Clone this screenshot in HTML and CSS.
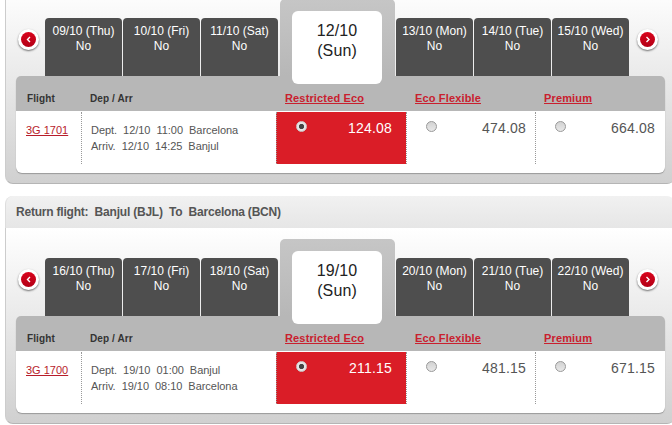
FILE: index.html
```html
<!DOCTYPE html>
<html lang="en">
<head>
  <meta charset="UTF-8">
  <title>Select flights</title>
  <link rel="stylesheet" href="styles.css">
</head>
<body>

  <form class="flights">

    <section class="flight outbound">
      <div class="flight-body">
        <div class="days">
          <button type="button" class="arrow" aria-label="Previous days">
            <svg viewBox="0 0 15 15"><path d="M9 5L6.5 7.5L9 10"/></svg>
          </button>
          <div class="day">09/10 (Thu)<br>No</div>
          <div class="day">10/10 (Fri)<br>No</div>
          <div class="day">11/10 (Sat)<br>No</div>
          <div class="day-active"><div class="day-card">12/10<br>(Sun)</div></div>
          <div class="day">13/10 (Mon)<br>No</div>
          <div class="day">14/10 (Tue)<br>No</div>
          <div class="day">15/10 (Wed)<br>No</div>
          <button type="button" class="arrow next" aria-label="Next days">
            <svg viewBox="0 0 15 15"><path d="M6.5 5L9 7.5L6.5 10"/></svg>
          </button>
        </div>

        <div class="fares">
          <div class="fares-head">
            <span>Flight</span>
            <span>Dep / Arr</span>
            <a href="#">Restricted Eco</a>
            <a href="#">Eco Flexible</a>
            <a href="#">Premium</a>
          </div>
          <div class="fares-row">
            <div class="number"><a href="#">3G 1701</a></div>
            <div class="times">Dept.&nbsp; 12/10&nbsp; 11:00&nbsp; Barcelona<br>Arriv.&nbsp; 12/10&nbsp; 14:25&nbsp; Banjul</div>
            <label class="fare selected"><input type="radio" name="out" checked><span>124.08</span></label>
            <label class="fare"><input type="radio" name="out"><span>474.08</span></label>
            <label class="fare"><input type="radio" name="out"><span>664.08</span></label>
          </div>
        </div>
      </div>
    </section>

    <section class="flight">
      <h2>Return flight:&nbsp; Banjul (BJL)&nbsp; To&nbsp; Barcelona (BCN)</h2>
      <div class="flight-body">
        <div class="days">
          <button type="button" class="arrow" aria-label="Previous days">
            <svg viewBox="0 0 15 15"><path d="M9 5L6.5 7.5L9 10"/></svg>
          </button>
          <div class="day">16/10 (Thu)<br>No</div>
          <div class="day">17/10 (Fri)<br>No</div>
          <div class="day">18/10 (Sat)<br>No</div>
          <div class="day-active"><div class="day-card">19/10<br>(Sun)</div></div>
          <div class="day">20/10 (Mon)<br>No</div>
          <div class="day">21/10 (Tue)<br>No</div>
          <div class="day">22/10 (Wed)<br>No</div>
          <button type="button" class="arrow next" aria-label="Next days">
            <svg viewBox="0 0 15 15"><path d="M6.5 5L9 7.5L6.5 10"/></svg>
          </button>
        </div>

        <div class="fares">
          <div class="fares-head">
            <span>Flight</span>
            <span>Dep / Arr</span>
            <a href="#">Restricted Eco</a>
            <a href="#">Eco Flexible</a>
            <a href="#">Premium</a>
          </div>
          <div class="fares-row">
            <div class="number"><a href="#">3G 1700</a></div>
            <div class="times">Dept.&nbsp; 19/10&nbsp; 01:00&nbsp; Banjul<br>Arriv.&nbsp; 19/10&nbsp; 08:10&nbsp; Barcelona</div>
            <label class="fare selected"><input type="radio" name="ret" checked><span>211.15</span></label>
            <label class="fare"><input type="radio" name="ret"><span>481.15</span></label>
            <label class="fare"><input type="radio" name="ret"><span>671.15</span></label>
          </div>
        </div>
      </div>
    </section>

  </form>

</body>
</html>
```
FILE: styles.css
```css
* {
  box-sizing: border-box;
}
body {
  margin: 0;
  background: #fff;
  font-family: "Liberation Sans", Arial, sans-serif;
  font-size: 12px;
  overflow: hidden;
}
.flights {
  display: flex;
  flex-direction: column;
  gap: 12px;
  width: 675px;
  padding-left: 5px;
}
.flight.outbound {
  margin-top: -12px;
}
.flight h2 {
  margin: 0;
  height: 32px;
  padding-left: 10px;
  border-left: 1px solid #ddd;
  border-radius: 8px 8px 0 0;
  background: linear-gradient(#f1f1f1, #e6e6e6);
  color: #555;
  font-size: 12px;
  line-height: 32px;
  letter-spacing: -0.21px;
}
.flight-body {
  height: 196px;
  padding: 11px 0 0 10px;
  background: linear-gradient(#fff, #d0d0d0);
  border: solid #b5b5b5;
  border-width: 0 0 1px 1px;
  border-left-color: #ccc;
  border-radius: 0 0 8px 8px;
}

/* day tabs */
.days {
  display: flex;
  align-items: flex-end;
  gap: 1px;
  height: 77px;
}
.day {
  width: 77px;
  height: 58px;
  padding-top: 6px;
  border-radius: 4px 4px 0 0;
  background: #4e4e4e;
  color: #fff;
  line-height: 15px;
  text-align: center;
}
.day-active {
  width: 115px;
  height: 77px;
  margin-left: 1px;
  padding: 12px 13px 0 12px;
  border-radius: 5px 5px 0 0;
  background: linear-gradient(#c6c6c6, #b7b7b7);
}
.day-card {
  position: relative;
  z-index: 1;
  height: 73px;
  padding-top: 10px;
  border-radius: 6px;
  background: #fff;
  color: #222;
  font-size: 16px;
  line-height: 20px;
  letter-spacing: 0.1px;
  text-align: center;
}
.arrow {
  display: flex;
  align-items: center;
  justify-content: center;
  width: 21px;
  height: 21px;
  margin: 0 5px 26px 2px;
  padding: 0;
  border: 0;
  border-radius: 50%;
  background: #fff;
  box-shadow: 0 1px 2px rgba(0, 0, 0, 0.55);
}
.arrow.next {
  margin: 0 0 26px 7px;
}
.arrow svg {
  width: 15px;
  height: 15px;
  border-radius: 50%;
  background: linear-gradient(#d9041c, #b30016);
}
.arrow path {
  fill: none;
  stroke: #fff;
  stroke-width: 1.4;
}

/* fares table */
.fares {
  width: 649px;
  height: 97px;
  border-radius: 6px;
  background: #fff;
  box-shadow: 0 1px 1px #999;
}
.fares-head,
.fares-row {
  display: grid;
  grid-template-columns: 65px 195px 130px 129px 130px;
}
.fares-head {
  height: 35px;
  padding-top: 10px;
  border-radius: 5px 5px 0 0;
  background: #b7b7b7;
  color: #333;
  font-size: 10px;
  font-weight: bold;
  line-height: 25px;
}
.fares-head span {
  padding-left: 11px;
  letter-spacing: 0.1px;
}
.fares-head span + span {
  padding-left: 9px;
}
.fares-head a {
  padding-left: 9px;
  color: #c9202e;
  font-size: 11px;
  letter-spacing: 0.15px;
}
a {
  color: #b71c2b;
}
.fares-row {
  height: 53px;
  padding-top: 1px;
}
.number {
  padding: 12px 0 0 10px;
  font-size: 11px;
}
.times {
  padding: 10px 0 0 9px;
  border-left: 1px dotted #999;
  color: #555;
  font-size: 11px;
  line-height: 16px;
  letter-spacing: -0.04px;
}
.fare {
  display: flex;
  justify-content: space-between;
  padding: 8px 9px 0 19px;
  border-left: 1px dotted #999;
  color: #555;
  font-size: 14px;
  line-height: 17px;
  letter-spacing: 0.2px;
}
.fare:last-child {
  padding-right: 10px;
}
.fare.selected {
  padding-right: 14px;
  background: #da1d27;
  color: #fff;
}
.fare input {
  appearance: none;
  width: 11px;
  height: 11px;
  margin: 1px 0 0;
  border: 1px solid #999;
  border-radius: 50%;
  background: linear-gradient(#d2d2d2, #e8e8e8);
}
.fare input:checked {
  border-color: #ccc;
  background: radial-gradient(circle, #444 2.2px, #e6e6e6 3px);
}
```
